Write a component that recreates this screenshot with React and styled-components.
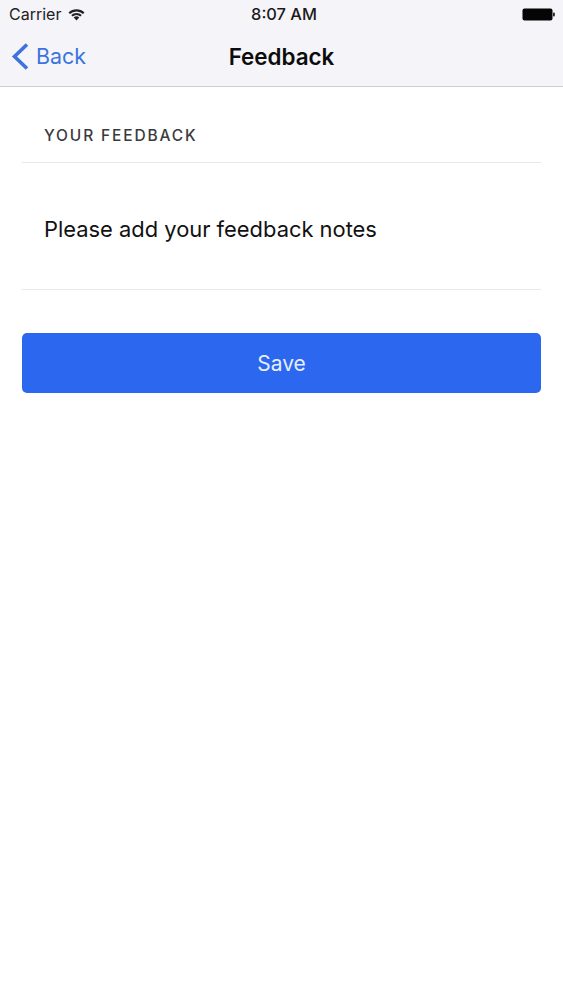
import React from "react";
import styled, { createGlobalStyle } from "styled-components";

const Global = createGlobalStyle`
  html, body { margin: 0; padding: 0; background: #fff; }
  body { font-family: Inter, "Liberation Sans", sans-serif; }
`;

const Page = styled.div`
  width: 563px;
  height: 1000px;
  background: #fff;
  overflow: hidden;
`;

const Header = styled.header`
  height: 86px;
  background: #f5f4f8;
  border-bottom: 1px solid #cfcfd1;
  display: flex;
  flex-direction: column;
`;

const StatusBar = styled.div`
  height: 28px;
  display: grid;
  grid-template-columns: 1fr auto 1fr;
  align-items: center;
  padding: 0 8px;
  color: #222;
`;

const StatusLeft = styled.div`
  display: flex;
  align-items: center;
  gap: 7px;
  padding-left: 1px;
  font-size: 16px;
`;

const Clock = styled.div`
  margin-left: 5px;
  font-weight: 500;
  font-size: 16.4px;
  color: #1a1a1a;
`;

const StatusRight = styled.div`
  display: flex;
  justify-content: flex-end;
  align-items: center;
`;

const NavBar = styled.nav`
  flex: 1;
  display: grid;
  grid-template-columns: 1fr auto 1fr;
  align-items: center;
  padding: 0 11px 2px;
`;

const BackLink = styled.div`
  display: flex;
  align-items: center;
  gap: 6px;
  color: #3b74de;
  font-size: 21.4px;
`;

const Title = styled.h1`
  margin: 0;
  font-size: 22.4px;
  font-weight: 600;
  color: #0c0c0c;
`;

const Content = styled.main`
  padding: 0 22px;
`;

const SectionLabel = styled.div`
  height: 76px;
  box-sizing: border-box;
  padding: 39px 0 0 22px;
  font-size: 15.5px;
  line-height: 20px;
  font-weight: 500;
  letter-spacing: 1.85px;
  color: #3a3a3e;
  border-bottom: 1px solid #e9e9e9;
`;

const NotesRow = styled.div`
  height: 127px;
  box-sizing: border-box;
  padding: 51px 0 0 22px;
  font-size: 21.9px;
  line-height: 30px;
  color: #111;
  border-bottom: 1px solid #e9e9e9;
`;

const SaveButton = styled.button`
  display: block;
  width: 100%;
  height: 60px;
  margin-top: 43px;
  border: 0;
  border-radius: 5px;
  background: #2c67f0;
  color: #e6eefc;
  font-family: inherit;
  font-size: 21px;
`;

export default function App() {
  return (
    <Page>
      <Global />
      <Header>
        <StatusBar>
          <StatusLeft>
            Carrier
            <svg width="17" height="13" viewBox="0 0 17 13" aria-hidden="true">
              <path d="M0.5 4.4A11.5 11.5 0 0 1 16.5 4.4L15 6A9.4 9.4 0 0 0 2 6Z" fill="#222" />
              <path d="M3.2 7.1A7.6 7.6 0 0 1 13.8 7.1L12.3 8.6A5.5 5.5 0 0 0 4.7 8.6Z" fill="#222" />
              <path d="M5.7 9.6A4 4 0 0 1 11.3 9.6L8.5 12.6Z" fill="#222" />
            </svg>
          </StatusLeft>
          <Clock>8:07 AM</Clock>
          <StatusRight>
            <svg width="33" height="15" viewBox="0 0 33 15" aria-hidden="true">
              <rect x="0.5" y="1.5" width="30" height="12" rx="2" fill="#050505" />
              <rect x="31" y="5.5" width="1.8" height="4" rx="0.8" fill="#222" />
            </svg>
          </StatusRight>
        </StatusBar>
        <NavBar>
          <BackLink>
            <svg width="19" height="29" viewBox="0 0 19 29" aria-hidden="true">
              <path d="M16 2.5L3.5 14.5L16 26.5" fill="none" stroke="#3b74de" strokeWidth="3.6" />
            </svg>
            Back
          </BackLink>
          <Title>Feedback</Title>
          <span />
        </NavBar>
      </Header>
      <Content>
        <SectionLabel>YOUR FEEDBACK</SectionLabel>
        <NotesRow>Please add your feedback notes</NotesRow>
        <SaveButton>Save</SaveButton>
      </Content>
    </Page>
  );
}
